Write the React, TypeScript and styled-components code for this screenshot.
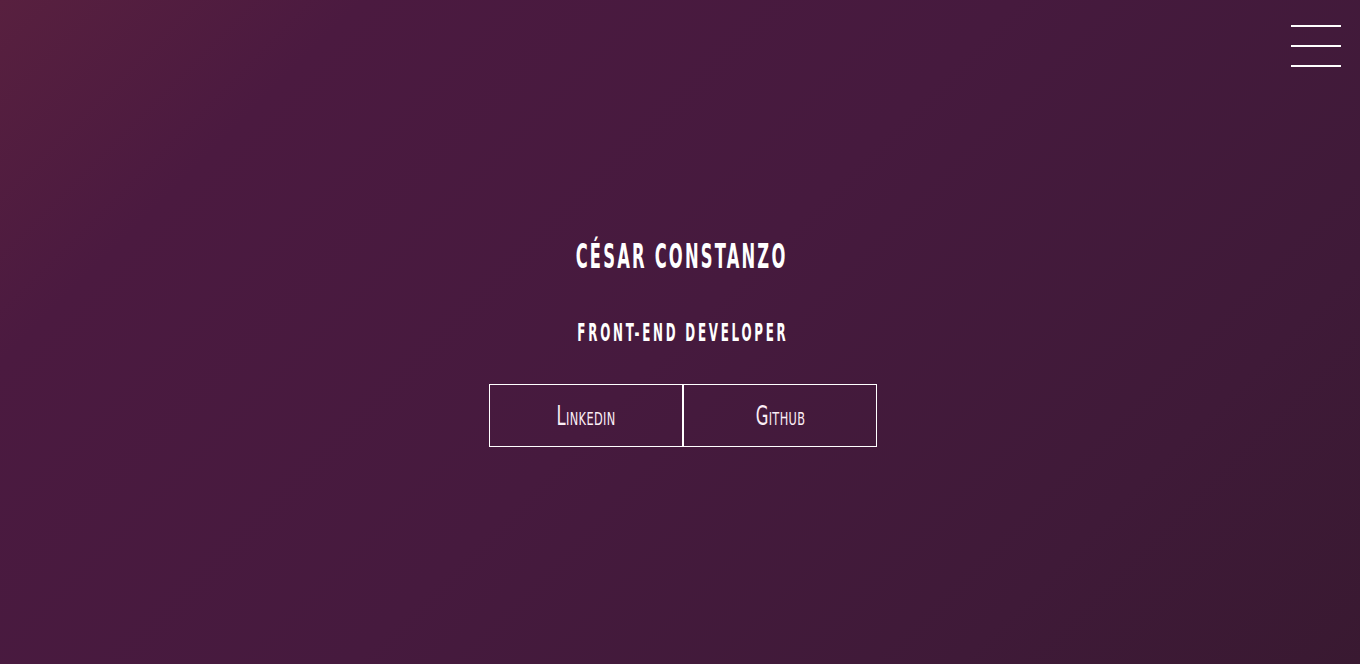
import React from "react";
import styled, { createGlobalStyle } from "styled-components";

const GlobalStyle = createGlobalStyle`
  html, body {
    margin: 0;
    padding: 0;
  }
  body {
    background: #3d1a36;
    font-family: "DejaVu Sans Condensed", "Liberation Sans", sans-serif;
    color: #fff;
  }
`;

const Page = styled.div`
  width: 100vw;
`;

const Hero = styled.header`
  position: relative;
  height: 100vh;
  display: flex;
  flex-direction: column;
  align-items: center;
  padding: 238px 0 0 6px;
  box-sizing: border-box;
  background: linear-gradient(
    135deg,
    #58203f 0%,
    #4b1a40 18%,
    #461a3e 50%,
    #3f1a38 80%,
    #391931 100%
  );
`;

const Burger = styled.button`
  position: absolute;
  top: 25px;
  right: 19px;
  width: 50px;
  padding: 0;
  border: 0;
  background: none;
  display: flex;
  flex-direction: column;
  gap: 18px;
  cursor: pointer;

  span {
    display: block;
    height: 2px;
    background: #fff;
  }
`;

const Name = styled.h1`
  margin: 0 0 0 -2px;
  font-size: 33px;
  line-height: 38px;
  font-weight: 700;
  letter-spacing: 4px;
  text-transform: uppercase;
  transform: scaleX(0.55);
`;

const Role = styled.h2`
  margin: 43px 0 0;
  font-size: 24px;
  line-height: 28px;
  font-weight: 700;
  letter-spacing: 5px;
  text-transform: uppercase;
  transform: scaleX(0.55);
`;

const Links = styled.nav`
  display: flex;
  margin-top: 37px;
`;

const LinkBox = styled.a`
  width: 194px;
  height: 63px;
  box-sizing: border-box;
  border: 1px solid #fff;
  display: flex;
  align-items: center;
  justify-content: center;
  color: #fbeef6;
  text-decoration: none;
  font-size: 26px;
  font-variant: small-caps;
  letter-spacing: 0.5px;

  span {
    display: inline-block;
    transform: scaleX(0.7);
  }
`;

const Section = styled.section<{ tall: number }>`
  height: ${(p) => p.tall}px;
  background: #3d1a36;
`;

export default function App() {
  return (
    <>
      <GlobalStyle />
      <Page>
        <Hero>
          <Burger aria-label="menu">
            <span />
            <span />
            <span />
          </Burger>
          <Name>César Constanzo</Name>
          <Role>Front-end developer</Role>
          <Links>
            <LinkBox href="#">
              <span>Linkedin</span>
            </LinkBox>
            <LinkBox href="#">
              <span>Github</span>
            </LinkBox>
          </Links>
        </Hero>
        <Section tall={640} />
        <Section tall={620} />
      </Page>
    </>
  );
}
